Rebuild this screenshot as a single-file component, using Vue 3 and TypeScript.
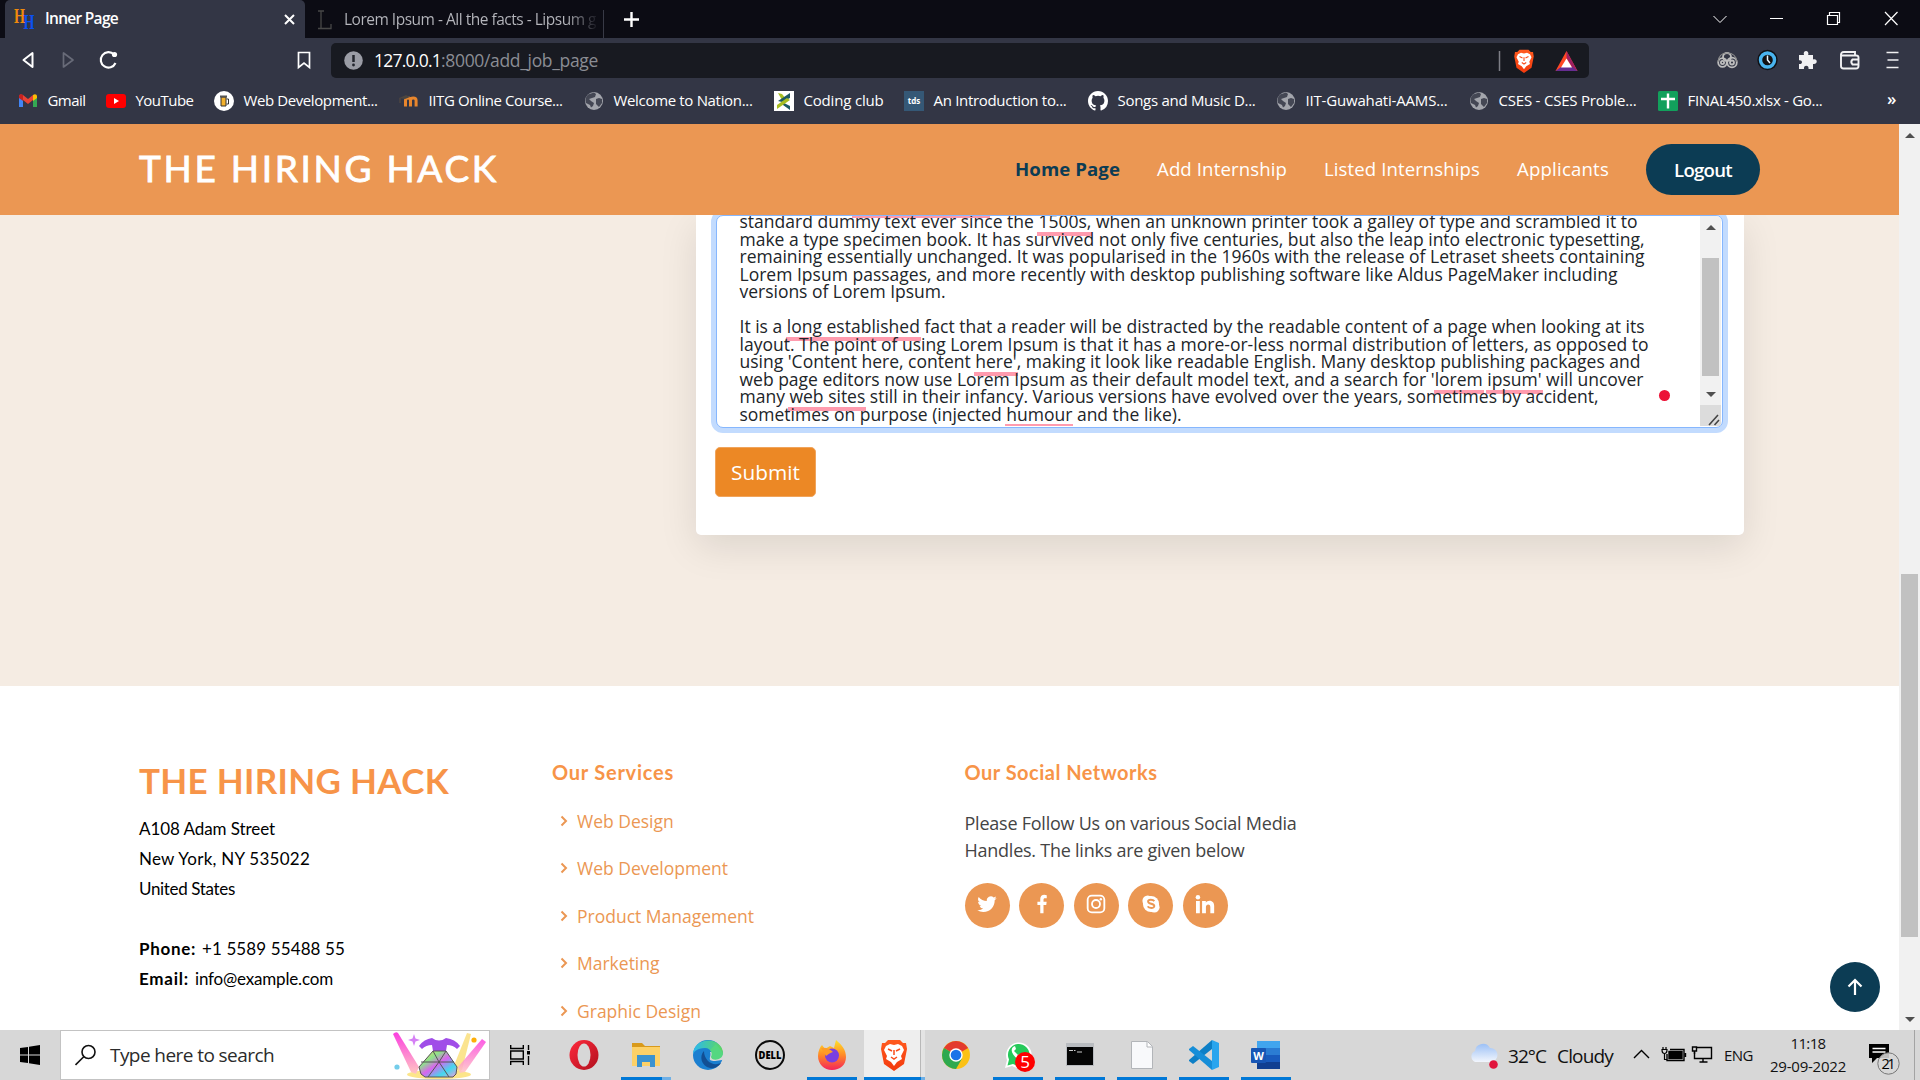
<script setup lang="ts">
import type { Directive } from 'vue'

interface Bookmark { label: string; icon: string; cell: number; text: number }

// Spreads the letters of a label so that it takes the given width in pixels.
const vFit: Directive<HTMLElement, number> = {
  mounted(el, binding) {
    const count = (el.textContent ?? '').length
    const natural = el.getBoundingClientRect().width
    if (count > 1) el.style.letterSpacing = `${(binding.value - natural) / count}px`
  },
}

const bookmarks: Bookmark[] = [
  { label: 'Gmail', icon: 'gmail', cell: 88, text: 38 },
  { label: 'YouTube', icon: 'youtube', cell: 108, text: 58 },
  { label: 'Web Development...', icon: 'beer', cell: 185, text: 134 },
  { label: 'IITG Online Course...', icon: 'moodle', cell: 185, text: 134 },
  { label: 'Welcome to Nation...', icon: 'globe', cell: 190, text: 139 },
  { label: 'Coding club', icon: 'coding', cell: 130, text: 80 },
  { label: 'An Introduction to...', icon: 'tds', cell: 184, text: 133 },
  { label: 'Songs and Music D...', icon: 'github', cell: 188, text: 138 },
  { label: 'IIT-Guwahati-AAMS...', icon: 'globe', cell: 193, text: 142 },
  { label: 'CSES - CSES Proble...', icon: 'globe', cell: 189, text: 138 },
  { label: 'FINAL450.xlsx - Go...', icon: 'sheets', cell: 220, text: 135 },
]

const services: string[] = ['Web Design', 'Web Development', 'Product Management', 'Marketing', 'Graphic Design']
const socials: string[] = ['twitter', 'facebook', 'instagram', 'skype', 'linkedin']
const apps: { name: string; state: string }[] = [
  { name: 'opera', state: '' },
  { name: 'explorer', state: 'open stacked' },
  { name: 'edge', state: '' },
  { name: 'dell', state: '' },
  { name: 'firefox', state: 'open' },
  { name: 'brave', state: 'open current' },
  { name: 'chrome', state: '' },
  { name: 'whatsapp', state: 'open' },
  { name: 'terminal', state: 'open' },
  { name: 'file', state: 'open' },
  { name: 'vscode', state: 'open' },
  { name: 'word', state: 'open' },
]
</script>

<template>
  <div class="screen">
    <svg class="defs" width="0" height="0">
      <defs>
        <symbol id="i-gmail" viewBox="0 0 20 20">
          <path d="M1 5v11h4V9z" fill="#4285f4" /><path d="M15 9v7h4V5z" fill="#34a853" />
          <path d="M1 5.5C1 3 3.500 3 5 4l5 4 5-4v5l-5 4-5-4-4-3z" fill="#ea4335" />
          <path d="M15 4c2-1.500 4-.5 4 1.500V7l-4 3z" fill="#fbbc04" /><path d="M1 5.500V7l4 3V4C3 2.500 1 3.500 1 5.500z" fill="#c5221f" />
        </symbol>
        <symbol id="i-youtube" viewBox="0 0 20 20"><rect y="3" width="20" height="14" rx="3" fill="#f00" /><path d="M8 7l5 3-5 3z" fill="#fff" /></symbol>
        <symbol id="i-beer" viewBox="0 0 20 20"><circle cx="10" cy="10" r="10" fill="#fff" /><path d="M7 6h5v9H7z" fill="#f4b22c" stroke="#333" /><path d="M12.500 8h2v5h-2" fill="none" stroke="#333" /><path d="M6 5.500h7" stroke="#555" stroke-width="2" /></symbol>
        <symbol id="i-moodle" viewBox="0 0 20 20"><path d="M6.500 15.500V9.500q0-2.500 2.500-2.500t2.500 2.500v6M11.500 9.500q0-2.500 2.800-2.500t2.800 2.500v6" fill="none" stroke="#e8862d" stroke-width="3" /><path d="M0 7l7-3 4 2-5 2z" fill="#4b4540" /><path d="M1 7v5" stroke="#5a4c40" /></symbol>
        <symbol id="i-globe" viewBox="0 0 20 20"><circle cx="10" cy="10" r="9" fill="#a3a5ac" /><path d="M4 3.500C1.500 6 1 9 2 12l4 2 1 2.500 2-1.500 1-3-3-2-2-2 3-1 3-1 1-3-2-1.500zM12 8l3-1 3 1v4l-3 4-3-3z" fill="#444754" /></symbol>
        <symbol id="i-coding" viewBox="0 0 20 20"><rect width="20" height="20" fill="#fff" /><path d="M4 2l4 1 4 5-3 3z" fill="#a8bd21" /><path d="M16 2v5l-8 4-4-1zM8 11l8 4v4l-7-5z" fill="#1d5963" /><path d="M3 18v-4l10-7 3 2z" fill="#a8bd21" /></symbol>
        <symbol id="i-tds" viewBox="0 0 20 20"><rect width="20" height="20" fill="#355876" /><text x="10" y="12.800" font-family="Open Sans" font-size="8" font-weight="700" text-anchor="middle" fill="#fff">tds</text></symbol>
        <symbol id="i-github" viewBox="0 0 16 16"><path fill="#fff" d="M8 0C3.580 0 0 3.580 0 8c0 3.540 2.290 6.530 5.470 7.590.4.070.55-.17.55-.38 0-.19-.01-.82-.01-1.490-2.010.37-2.530-.49-2.690-.94-.09-.23-.48-.94-.82-1.130-.28-.15-.68-.52-.01-.53.63-.01 1.080.58 1.230.82.72 1.210 1.870.87 2.330.66.07-.52.28-.87.51-1.070-1.780-.2-3.640-.89-3.640-3.950 0-.87.31-1.590.82-2.150-.08-.2-.36-1.020.08-2.120 0 0 .67-.21 2.200.82a7.600 7.600 0 0 1 4 0c1.530-1.040 2.200-.82 2.200-.82.44 1.100.16 1.920.08 2.120.51.56.82 1.270.82 2.150 0 3.070-1.870 3.750-3.650 3.950.29.25.54.73.54 1.480 0 1.070-.01 1.930-.01 2.200 0 .21.15.46.55.38A8 8 0 0 0 16 8c0-4.420-3.580-8-8-8z" /></symbol>
        <symbol id="i-sheets" viewBox="0 0 20 20"><rect width="20" height="20" rx="1.500" fill="#12a05c" /><path d="M10 2.500v15M3 8h14" stroke="#fff" stroke-width="2.400" /></symbol>

        <symbol id="s-twitter" viewBox="0 0 24 24"><path d="M23.600 4.900a9.500 9.500 0 0 1-2.700.8 4.700 4.700 0 0 0 2.100-2.600 9.600 9.600 0 0 1-3 1.100 4.800 4.800 0 0 0-8.200 4.300A13.500 13.500 0 0 1 2 3.600a4.800 4.800 0 0 0 1.500 6.300 4.700 4.700 0 0 1-2.200-.6c0 2.300 1.600 4.300 3.800 4.800a4.700 4.700 0 0 1-2.100.1 4.800 4.800 0 0 0 4.400 3.300A9.600 9.600 0 0 1 .3 19.500a13.500 13.500 0 0 0 7.300 2.100c8.800 0 13.900-7.400 13.600-14.200a9.700 9.700 0 0 0 2.400-2.500z" /></symbol>
        <symbol id="s-facebook" viewBox="0 0 24 24"><path d="M13.800 23V13.200h3.300l.5-3.900h-3.800V6.900c0-1.100.3-1.900 1.900-1.900h2V1.500A27 27 0 0 0 14.800 1c-2.900 0-4.900 1.800-4.900 5v3.300H6.500v3.900h3.400V23z" /></symbol>
        <symbol id="s-instagram" viewBox="0 0 24 24"><g fill="none" stroke="#fff" stroke-width="2.200"><rect x="2" y="2" width="20" height="20" rx="5" /><circle cx="12" cy="12" r="4.800" /></g><circle cx="17.800" cy="6.200" r="1.500" /></symbol>
        <symbol id="s-skype" viewBox="0 0 24 24"><circle cx="8" cy="8" r="6.300" /><circle cx="16" cy="16" r="6.300" /><circle cx="12" cy="12" r="9.700" /><path d="M16 8.500C14.500 6.500 8.500 6.200 8.500 9c0 3.500 7.500 2 7.500 5.500 0 3.200-6.700 2.800-8 .3" fill="none" stroke="#eb9753" stroke-width="2.300" /></symbol>
        <symbol id="s-linkedin" viewBox="0 0 24 24"><circle cx="3.500" cy="3.800" r="2.700" /><path d="M1.200 8.500h4.600V23H1.200zM8.500 8.500H13v2c2-3.600 10-3.400 10 3.700V23h-4.600v-7.500c0-4.200-5.300-3.900-5.300 0V23H8.500z" /></symbol>

        <linearGradient id="g-op" x1="0" x2="1" y2="1"><stop stop-color="#ff2a3c" /><stop offset="1" stop-color="#b0101e" /></linearGradient>
        <linearGradient id="g-br" y2="1" x2="0"><stop stop-color="#ff5a1f" /><stop offset="1" stop-color="#f33a0d" /></linearGradient>
        <linearGradient id="g-ed" x2="1"><stop stop-color="#2bb8f0" /><stop offset="1" stop-color="#5fd85c" /></linearGradient>
        <linearGradient id="g-ff" y2="1" x2="0"><stop stop-color="#ffe22b" /><stop offset=".5" stop-color="#ff8a26" /><stop offset="1" stop-color="#f5245b" /></linearGradient>
        <linearGradient id="g-cl" y2="1" x2="0"><stop stop-color="#9cc0f5" /><stop offset="1" stop-color="#f2f6fd" /></linearGradient>
        <linearGradient id="g-dr" x2="1" y2="1"><stop stop-color="#ffd75e" /><stop offset=".3" stop-color="#8ee28b" /><stop offset=".5" stop-color="#d964ef" /><stop offset=".75" stop-color="#42d9ee" /><stop offset="1" stop-color="#f59ad6" /></linearGradient>
        <linearGradient id="g-pk" y2="1" x2="0"><stop stop-color="#fb3fe0" /><stop offset="1" stop-color="#ffc6c2" /></linearGradient>

        <symbol id="a-opera" viewBox="0 0 40 40"><ellipse cx="20" cy="20" rx="14.500" ry="15" fill="url(#g-op)" /><ellipse cx="20" cy="20" rx="6.500" ry="11.500" fill="#d7d7d7" /></symbol>
        <symbol id="a-explorer" viewBox="0 0 40 40"><path d="M6 8h10l3 3h15v5H6z" fill="#d99a1b" /><path d="M6 12h28v19H6z" fill="#fdd167" /><path d="M11 20h18v12h-5v-5h-8v5h-5z" fill="#3c93cf" /></symbol>
        <symbol id="a-edge" viewBox="0 0 40 40"><circle cx="20" cy="20" r="15" fill="#1b7fd0" /><path d="M5 20C5 1 34 1 35 18c0 8-12 8-12 4 1-2 1-9-6-9-8 0-12 4-12 7z" fill="url(#g-ed)" /><path d="M16 16c-5 5-3 15 6 17 5 1 9-2 11-5-9 4-17-3-17-12z" fill="#124f94" /><path d="M22 17c2 5-4 9 5 9l7-1 3-1-1-4-8-3z" fill="#d7d7d7" /><path d="M35 18c0 8-12 8-12 4 1-2 1-5-1-7l6-6z" fill="#55d780" /></symbol>
        <symbol id="a-dell" viewBox="0 0 40 40"><circle cx="20" cy="20" r="14" fill="none" stroke="#0a0a0a" stroke-width="2" /><text x="20" y="24" font-family="Open Sans" font-size="10.500" font-weight="800" text-anchor="middle" textLength="23" lengthAdjust="spacingAndGlyphs">DELL</text></symbol>
        <symbol id="a-firefox" viewBox="0 0 40 40"><path d="M24 5c6 5 10 10 10 17 0 8-6 13-14 13S6 29 6 21c0-5 2-9 4-11l3 4 5-3 4 2z" fill="url(#g-ff)" /><circle cx="20" cy="20.500" r="7" fill="#7a3fe0" /><path d="M9 13c5-1 9 1 12 4-4 1-5 3-7 4z" fill="#ff9c27" /></symbol>
        <symbol id="a-brave" viewBox="0 0 40 40"><path d="M14 5h12l3 3 3 0 1 6-3 15-10 7-10-7L7 14l1-6 3 0z" fill="url(#g-br)" /><path d="M12 11l4-2 4 1 4-1 4 2 2 4-3 6 1 3-5 3-3 4-3-4-5-3 1-3-3-6z" fill="#fff" /><path d="M14 14l4 2M26 14l-4 2M20 15v5M17 22l3 2 3-2" fill="none" stroke="#fa4d1b" stroke-width="1.500" /></symbol>
        <symbol id="a-chrome" viewBox="0 0 40 40"><circle cx="20" cy="20" r="14" fill="#fbc116" /><path d="M20 20L7.900 13A14 14 0 0 1 32.100 13z" fill="#e33b2e" /><path d="M7.900 13A14 14 0 0 0 20 34l6-10.500-6-3.500z" fill="#2da94f" /><circle cx="20" cy="20" r="6.700" fill="#fff" /><circle cx="20" cy="20" r="5.300" fill="#1a73e8" /></symbol>
        <symbol id="a-whatsapp" viewBox="0 0 40 40"><path d="M7 33l2-8A12.800 12.800 0 1 1 14 31z" fill="#fff" /><path d="M9.500 30.500l1.500-6A10.800 10.800 0 1 1 15 29z" fill="#26c95a" /><path d="M15 12c-3 3-1 8 6 13l4-2-3-4-2 1-4-4 2-2-1-3z" fill="#fff" /><circle cx="27" cy="27" r="10" fill="#f00" /><text x="27" y="33" font-family="Open Sans" font-size="17" text-anchor="middle" fill="#fff">5</text></symbol>
        <symbol id="a-terminal" viewBox="0 0 40 40"><rect x="6" y="8" width="28" height="23" fill="#b9bcc0" /><rect x="7" y="12" width="26" height="18" fill="#050505" /><path d="M9 15.500h4M14 15.500h1.500M17 17h5" stroke="#ccc" /></symbol>
        <symbol id="a-file" viewBox="0 0 40 40"><path d="M9.500 6.500h16l5 5v22h-21z" fill="#f8f9fb" stroke="#b2b5b9" /><path d="M25 7v5h5" fill="#fff" stroke="#b2b5b9" /></symbol>
        <symbol id="a-vscode" viewBox="0 0 40 40"><path d="M28 5l7 3v24l-7 3z" fill="#2aa5ee" /><path d="M28 5v9L9 29l-4-3v-1z" fill="#0d7fc6" /><path d="M28 35v-9L9 11l-4 3v1z" fill="#168ed8" /></symbol>
        <symbol id="a-word" viewBox="0 0 40 40"><path d="M11 6h23v8H11z" fill="#41a5ee" /><path d="M11 13h23v7H11z" fill="#2b7cd3" /><path d="M11 20h23v7H11z" fill="#185abd" /><path d="M11 27h23v7H11z" fill="#103f91" /><rect x="5" y="13" width="15" height="15" rx="1" fill="#1756b5" /><text x="12.500" y="24.500" font-family="Open Sans" font-size="11" font-weight="700" text-anchor="middle" fill="#fff">W</text></symbol>
      </defs>
    </svg>

    <!-- Tab strip -->
    <div class="tabs">
      <div class="tab active">
        <svg class="fav" width="21" height="22" viewBox="0 0 21 22" font-family="Liberation Serif" font-size="21" font-weight="700"><text x="0" y="15" fill="#f08a0c" textLength="11" lengthAdjust="spacingAndGlyphs">H</text><text x="9.500" y="20.500" fill="#0b50f0" textLength="11" lengthAdjust="spacingAndGlyphs">H</text></svg>
        <span class="title" v-fit="73">Inner Page</span>
        <svg class="x" width="11" height="11" viewBox="0 0 11 11"><path d="M1 1l9 9M10 1l-9 9" stroke="#fff" stroke-width="2" /></svg>
      </div>
      <div class="tab">
        <svg class="fav2" width="16" height="20" viewBox="0 0 16 20"><path d="M1 1h6M4 1v17M1 18.500h13V14" fill="none" stroke="#474747" stroke-width="1.300" /></svg>
        <span class="title dim" v-fit="252">Lorem Ipsum - All the facts - Lipsum g</span>
      </div>
      <svg class="plus" width="15" height="15" viewBox="0 0 15 15"><path d="M7.500 0v15M0 7.500h15" stroke="#fff" stroke-width="2.400" /></svg>
      <svg class="winctl" width="190" height="20" viewBox="0 0 190 20" fill="none" stroke="#fff"><path d="M3.500 7l6.500 6.500L16.500 7" /><path d="M60 9.500h13" /><path d="M117.500 6.500h10v9h-10zM119.500 6V3.500h10v10h-2" stroke-width="1.200" /><path d="M175 3l12.500 13M187.500 3L175 16" stroke-width="1.200" /></svg>
    </div>

    <!-- Toolbar -->
    <div class="toolbar">
      <svg class="navs" width="300" height="30" viewBox="0 0 300 30" fill="none" stroke="#fff" stroke-width="2">
        <path d="M12.500 8v14L3.500 15z" stroke-linejoin="round" /><path d="M43.500 8v14l9.500-7z" stroke="#686b78" stroke-width="1.700" stroke-linejoin="round" />
        <path d="M94 9.500A7.700 7.700 0 1 0 95.500 18" stroke-width="2.100" /><circle cx="94.500" cy="9.500" r="2.600" fill="#fff" stroke="none" />
        <path d="M278.500 7.500h11v15l-5.500-4.500-5.500 4.500z" stroke-width="1.700" />
      </svg>
      <div class="url">
        <svg width="19" height="19" viewBox="0 0 19 19"><circle cx="9.500" cy="9.500" r="9.300" fill="#9a9ca5" /><path d="M9.500 4v7" stroke="#22252d" stroke-width="2.500" /><circle cx="9.500" cy="14" r="1.400" fill="#22252d" /></svg>
        <span class="host" v-fit="67">127.0.0.1</span><span class="path" v-fit="157">:8000/add_job_page</span>
        <svg class="shields" width="90" height="28" viewBox="0 0 90 28">
          <path d="M2.500 4v20" stroke="#7c7e86" stroke-width="1.500" />
          <use href="#a-brave" x="12" y="-1" width="30" height="30" />
          <path d="M69.500 4L58.500 24h22z" fill="#ff4724" /><path d="M69.500 4l11 20-5-3-6-10z" fill="#9e1f63" /><path d="M58.500 24h22l-5-4H64z" fill="#662d91" /><path d="M69.500 11.500l5.500 9H64z" fill="#fff" />
        </svg>
      </div>
      <svg class="exts" width="190" height="30" viewBox="0 0 190 30">
        <g fill="none" stroke="#bdbdbd" stroke-width="1.800"><circle cx="12" cy="12" r="4" /><circle cx="7.500" cy="17.500" r="4.300" /><circle cx="17" cy="17.500" r="4.800" /><path d="M3 17q1-9 9-9 9 0 10 9" stroke="#8d8d8d" stroke-width="1.200" /><circle cx="17" cy="17.500" r="2" /><circle cx="7.500" cy="17.500" r="1.600" /></g>
        <circle cx="52.500" cy="15" r="10.200" fill="#101216" /><circle cx="52.500" cy="15" r="7" fill="#111" stroke="#49b4ee" stroke-width="3.400" /><path d="M52.500 10.500V15l2.500 3" fill="none" stroke="#e8f6ff" stroke-width="1.500" />
        <path d="M84 10h5c-1.800-5.500 5.800-5.500 4.200 0H98v4.500c5-1.500 5 5.500 0 4.500V24h-4.500c1-4.500-5.500-4.500-4.500 0H84v-5c4 .8 4-4.500 0-3.800z" fill="#f1f1f3" />
        <g fill="none" stroke="#f1f1f3" stroke-width="1.900"><path d="M126 10.500V21q0 2.500 2.500 2.500H141q2.500 0 2.500-2.500v-8.500q0-2-2.500-2zm0 .5q-.5-4 3-4h11v3.500" /><path d="M143 14.500h-5.500q-2.500 2.500 0 5h5.500" /></g>
        <path d="M171.500 7.500h12M172.500 15h11M171.500 22.500h12" stroke="#f1f1f3" stroke-width="1.700" />
      </svg>
    </div>

    <!-- Bookmarks -->
    <div class="bookmarks">
      <div v-for="b in bookmarks" :key="b.label" class="bm" :style="{ width: b.cell + 'px' }">
        <svg width="20" height="20"><use :href="'#i-' + b.icon" width="20" height="20" /></svg>
        <span v-fit="b.text">{{ b.label }}</span>
      </div>
      <span class="more">»</span>
    </div>

    <!-- Web page -->
    <div class="viewport">
      <div class="page">
        <header class="site">
          <h1 v-fit="360">THE HIRING HACK</h1>
          <nav>
            <a class="on" v-fit="105">Home Page</a><a v-fit="130">Add Internship</a><a v-fit="156">Listed Internships</a><a v-fit="92">Applicants</a>
            <a class="logout"><span v-fit="58">Logout</span></a>
          </nav>
        </header>
        <section class="hero">
          <div class="card">
            <div class="area">
              <div class="lines">
                <u class="first"></u>
                <p><span v-fit="898">standard dummy text ever since the <u>1500s,</u> when an unknown printer took a galley of type and scrambled it to</span></p>
                <p><span v-fit="905">make a type specimen book. It has survived not only five centuries, but also the leap into electronic typesetting,</span></p>
                <p><span v-fit="905">remaining essentially unchanged. It was popularised in the 1960s with the release of Letraset sheets containing</span></p>
                <p><span v-fit="878">Lorem Ipsum passages, and more recently with desktop publishing software like Aldus PageMaker including</span></p>
                <p><span v-fit="206">versions of Lorem Ipsum.</span></p>
                <p></p>
                <p><span v-fit="905">It is a <u>long established</u> fact that a reader will be distracted by the readable content of a page when looking at its</span></p>
                <p><span v-fit="909">layout. The point of using Lorem Ipsum is that it has a more-or-less normal distribution of letters, as opposed to</span></p>
                <p><span v-fit="901">using 'Content here, content <u>here'</u>, making it look like readable English. Many desktop publishing packages and</span></p>
                <p><span v-fit="904">web page editors now use Lorem Ipsum as their default model text, and a search for '<u>lorem</u> <u>ipsum'</u> will uncover</span></p>
                <p><span v-fit="859">many <u>web sites</u> still in their infancy. Various versions have evolved over the years, sometimes by accident,</span></p>
                <p><span v-fit="442">sometimes on purpose (injected <u class="thin">humour</u> and the like).</span></p>
              </div>
              <i class="dot"></i>
              <div class="bar">
                <b class="up"></b><div class="thumb"></div><b class="down"></b>
                <svg class="grip" width="21" height="21" viewBox="0 0 21 21"><path d="M9 20l9-10M14.500 20l4.500-5M9 20l2-2" stroke="#444" stroke-width="1.600" /></svg>
              </div>
            </div>
            <button class="submit"><span v-fit="69">Submit</span></button>
          </div>
        </section>
        <footer>
          <div class="col c1">
            <h2><span v-fit="310">THE HIRING HACK</span></h2>
            <p><span v-fit="136">A108 Adam Street</span></p>
            <p><span v-fit="171">New York, NY 535022</span></p>
            <p><span v-fit="96">United States</span></p>
            <p></p>
            <p><strong v-fit="57">Phone:</strong><span class="val" v-fit="143">+1 5589 55488 55</span></p>
            <p><strong v-fit="50">Email:</strong><span class="val" v-fit="138">info@example.com</span></p>
          </div>
          <div class="col c2">
            <h4><span v-fit="122">Our Services</span></h4>
            <div v-for="s in services" :key="s" class="svc">
              <svg width="8" height="12" viewBox="0 0 8 12"><path d="M1.500 1.500L6 6l-4.500 4.500" fill="none" stroke="#eb9753" stroke-width="2" /></svg><span>{{ s }}</span>
            </div>
          </div>
          <div class="col c3">
            <h4><span v-fit="193">Our Social Networks</span></h4>
            <div class="follow"><span v-fit="332">Please Follow Us on various Social Media</span><br /><span v-fit="280">Handles. The links are given below</span></div>
            <div class="socials">
              <a v-for="s in socials" :key="s"><svg width="20" height="20" fill="#fff"><use :href="'#s-' + s" width="20" height="20" /></svg></a>
            </div>
          </div>
        </footer>
        <div class="top"><svg width="16" height="18" viewBox="0 0 16 18"><path d="M8 17V2M1.500 8.500L8 2l6.500 6.500" fill="none" stroke="#fff" stroke-width="2.200" /></svg></div>
      </div>
      <div class="scroll"><b class="up"></b><div class="thumb"></div><b class="down"></b></div>
    </div>

    <!-- Taskbar -->
    <div class="taskbar">
      <div class="start"><svg width="20" height="20" viewBox="0 0 20 20"><path d="M0 3l8-1v7.500H0zM9 1.800L20 0v9.500H9zM0 10.500h8V18l-8-1zM9 10.500h11V20L9 18.200z" /></svg></div>
      <div class="search">
        <svg width="22" height="22" viewBox="0 0 22 22" fill="none" stroke="#111" stroke-width="1.600"><circle cx="13.500" cy="8" r="6.500" /><path d="M9 12.500L.5 21" /></svg>
        <span v-fit="164">Type here to search</span>
        <svg class="art" width="96" height="48" viewBox="0 0 96 48">
          <ellipse cx="47" cy="43.500" rx="32" ry="4.500" fill="#fce58a" />
          <path d="M1 3q3-3 5-1l21 34-3 7-5-2z" fill="url(#g-pk)" /><path d="M79 3l-4-1-12 30 3 10 4-3z" fill="#fbe183" opacity=".9" /><path d="M94 11l-4-3-24 28 2 6 5-1z" fill="url(#g-pk)" opacity=".85" />
          <path d="M22 3l1.500 4.500L28 9l-4.500 1.500L22 15l-1.500-4.500L16 9l4.500-1.500z" fill="#d580f5" /><circle cx="82" cy="9" r="2.600" fill="#fdae08" /><circle cx="5" cy="36" r="2.600" fill="#74cdea" />
          <path d="M40 7q7 5 14 0 9 1 14 8l-3 3q-4-4-10-4l-1 6H41l-1-6q-6 0-10 4l-3-3q5-7 13-8z" fill="#a04de8" />
          <path d="M41 20h13l11 16-1 7-3 3H33l-4-3-2-7z" fill="url(#g-dr)" stroke="#555" /><path d="M41 20l6 11 7-11M29 31h33M47 31L36 46M47 31l10 15" fill="none" stroke="#555" />
        </svg>
      </div>
      <div class="view"><svg width="20" height="20" viewBox="0 0 20 20" fill="none" stroke="#000" stroke-width="1.400"><path d="M.7 0v3.500h12.600V0M.7 20v-3.500h12.600V20M.7 6h12.600v8H.7zM18.500 0v5M18.500 11v9" /><path d="M18.500 6v3.500" stroke-width="3" /></svg></div>
      <div v-for="a in apps" :key="a.name" class="app" :class="a.state"><svg width="40" height="40"><use :href="'#a-' + a.name" width="40" height="40" /></svg></div>
      <div class="tray">
        <svg class="cloud" width="32" height="28" viewBox="0 0 32 28"><path d="M7 20a6 6 0 0 1 0-11 8 8 0 0 1 15-3 7 7 0 0 1 1 14z" fill="url(#g-cl)" /><circle cx="25.500" cy="22.500" r="4.300" fill="#e1143c" /></svg>
        <span class="temp" v-fit="38">32°C</span><span class="cond" v-fit="56">Cloudy</span>
        <svg class="icons" width="82" height="20" viewBox="0 0 82 20" fill="none" stroke="#000" stroke-width="1.400"><path d="M3 14l7.500-7.500L18 14" /><rect x="38" y="7.500" width="13" height="7" fill="#000" /><path d="M36 10v6.500h17V5.500H39M54.500 9v4" /><path d="M32 3v2M35 3v2M31 5.500h5q0 4-2.500 4T31 5.500zM33.500 9v6.500H36" stroke-width="1.200" /><path d="M66 3.500h14.500v11H63.500V8M72 14v4M68.500 18h8" /><path d="M61.500 3h4v4h-4zM63.500 7v3" /></svg>
        <span class="eng" v-fit="29">ENG</span>
        <div class="clock"><span v-fit="35">11:18</span><span v-fit="76">29-09-2022</span></div>
        <svg class="note" width="34" height="36" viewBox="0 0 34 36"><path d="M2 3h20v14H10l-5 5v-5H2z" /><path d="M5.500 7.500h13M5.500 11h13" stroke="#fff" stroke-width="1.400" /><circle cx="21.500" cy="22.500" r="10.700" fill="#d7d7d7" fill-opacity=".88" stroke="#777" /><text x="21.500" y="28" font-family="Open Sans" font-size="14.500" font-weight="500" text-anchor="middle" textLength="14">21</text></svg>
        <i class="edge"></i>
      </div>
    </div>
  </div>
</template>

<style>
body { margin: 0; overflow: hidden; }
</style>

<style scoped>
* { box-sizing: border-box; }
.screen { width: 1920px; height: 1080px; overflow: hidden; font-family: "Open Sans", sans-serif; display: flex; flex-direction: column; background: #fff; }
.defs { position: absolute; }
span, strong, a, h1 { white-space: nowrap; }
svg { flex: none; display: block; }

.tabs { height: 38px; flex: none; background: #0c0c14; display: flex; align-items: center; }
.tab { height: 38px; display: flex; align-items: center; }
.tab.active { margin-left: 5px; width: 300px; background: #333645; border-radius: 5px 5px 0 0; }
.fav { margin-left: 9px; overflow: visible; }
.title { margin: 0 0 2px 10px; color: #fff; font-size: 15.500px; font-weight: 600; display: inline-block; line-height: 34px; }
.x { margin-left: auto; margin-right: 10px; }
.tab:not(.active) { width: 299px; border-right: 1px solid #383a46; height: 28px; margin-top: 10px; }
.fav2 { margin: -8px 0 0 12px; }
.title.dim { font-weight: 400; margin: -11px 0 0 11px; background: linear-gradient(90deg, #b6b7bd 88%, #1c1c25); -webkit-background-clip: text; background-clip: text; color: transparent; }
.plus { margin-left: 20px; }
.winctl { margin-left: auto; margin-right: 20px; }

.toolbar { height: 45px; flex: none; background: #333645; display: flex; align-items: center; }
.navs { margin-left: 19.500px; margin-top: -1px; }
.url { margin-left: 11.500px; width: 1258px; height: 35px; border-radius: 5px; background: #181a21; display: flex; align-items: center; font-size: 17.500px; padding-left: 13px; }
.host, .path { margin-top: -1px; }
.host { color: #fff; margin-left: 11px; }
.path { color: #8b8d94; }
.shields { margin-left: auto; margin-right: 2px; }
.exts { margin-left: 126px; margin-top: -1px; }

.bookmarks { height: 41px; flex: none; background: #333645; display: flex; align-items: center; padding: 0 0 5px 18px; color: #fff; font-size: 15px; }
.bm { display: flex; align-items: center; flex: none; }
.bm span { margin: -3px 0 0 9.500px; }
.more { margin-left: 9px; margin-top: -4px; line-height: 18px; font-size: 17px; font-weight: 600; }

.viewport { height: 906px; flex: none; display: flex; }
.page { width: 1899px; height: 906px; position: relative; overflow: hidden; }
.site { height: 91px; background: #eb9753; display: flex; align-items: center; position: relative; z-index: 3; padding: 0 139px; }
h1 { margin: -3px 0 0; font-family: Lato, sans-serif; font-weight: 400; font-size: 37px; color: #fff; line-height: 50px; -webkit-text-stroke: .8px #fff; }
nav { margin-left: auto; display: flex; align-items: center; gap: 37px; font-size: 18.600px; color: #fff; line-height: 27px; }
nav a { margin-top: -2px; }
nav .on { color: #0c3c54; font-weight: 700; }
nav .logout { width: 114px; height: 51px; margin-top: 0; border-radius: 26px; background: #0c3c54; display: flex; align-items: center; justify-content: center; font-weight: 600; padding-bottom: 1px; }

.hero { height: 471px; background: #f5ece3; display: flex; padding-left: 696px; position: relative; }
.card { width: 1048px; height: 320px; background: #fff; border-radius: 0 0 5px 5px; box-shadow: 0 12px 38px rgba(0, 0, 0, .1); padding-left: 20px; }
.area { position: relative; z-index: 0; width: 1006.500px; height: 213px; border: 1px solid #86b7fe; border-radius: 7px; box-shadow: 0 0 0 5px #c2dbfe; background: #fff; display: flex; overflow: hidden; overflow: clip; }
.lines { font-size: 17.500px; line-height: 17.500px; color: #212529; padding-left: 22.500px; margin-top: -3px; flex: 1; position: relative; }
.lines p { margin: 0; height: 17.500px; white-space: nowrap; }
.lines u { text-decoration: none; position: relative; }
.lines u::after { content: ""; position: absolute; left: -1px; right: -1px; top: 23px; height: 4px; background: #ff9bae; z-index: -1; }
.lines u.thin::after { top: 22px; height: 2px; }
.lines u.first { position: absolute; left: 136px; top: 3px; width: 136px; height: 2px; }
.lines u.first::after { top: 0; height: 2px; }
.dot { position: absolute; left: 942px; bottom: 26.500px; width: 11px; height: 11px; border-radius: 50%; background: #ec1337; }
.bar { width: 21px; background: #f1f1f1; display: flex; flex-direction: column; align-items: center; margin-right: .5px; height: 210px; }
b { border: 5px solid transparent; width: 0; height: 0; }
b.up { border-bottom-color: #505050; border-top: 0; }
b.down { border-top-color: #505050; border-bottom: 0; }
.bar .up { margin-top: 9px; }
.bar .thumb { width: 17px; height: 118px; background: #c1c1c1; margin-top: 28px; }
.bar .down { margin-top: 16px; }
.grip { margin-top: auto; background: #dcdcdc; }
.submit { display: flex; align-items: center; justify-content: center; margin: 19px 0 0 -1px; width: 101px; height: 50px; border: 1px solid #f0a45c; border-radius: 5px; background: #ec8825; color: #fff; font: 20.800px "Open Sans", sans-serif; padding: 0 0 1px; }

footer { display: flex; padding-left: 139px; height: 344px; }
.col { width: 413px; }
.c3 { margin-left: -.5px; }
h2 { font: 700 35px/44px Lato, sans-serif; color: #f79448; margin: 72px 0 12px; }
.c1 { color: #000; font: 17px/30px Lato, sans-serif; }
.c1 p { margin: 0; height: 30px; }
.val { margin-left: 6px; }
h4 { font: 700 20px/24px Lato, sans-serif; color: #f79448; margin: 74px 0 13px; }
.svc { display: flex; align-items: center; height: 47.500px; color: #eb9753; font-size: 17.500px; padding-left: 8px; }
.svc span { margin-left: 9px; }
.c3 h4 { margin-bottom: 26px; }
.follow { font-size: 18px; line-height: 27px; color: #444; }
.socials { display: flex; gap: 9.500px; margin-top: 19px; }
.socials a { width: 45px; height: 45px; border-radius: 50%; background: #eb9753; display: flex; align-items: center; justify-content: center; padding-bottom: 3px; }
.top { position: absolute; right: 19px; bottom: 18px; width: 50px; height: 50px; border-radius: 50%; background: #0c3c54; display: flex; align-items: center; justify-content: center; }
.scroll { width: 21px; background: #f1f1f1; display: flex; flex-direction: column; align-items: center; }
.scroll .up { margin-top: 9px; }
.scroll .thumb { width: 17px; height: 363px; background: #c1c1c1; margin-top: 436px; }
.scroll .down { margin-top: auto; margin-bottom: 8px; }

.taskbar { height: 50px; flex: none; background: #d7d7d7; display: flex; }
.start { width: 60px; padding: 15px 0 0 20px; }
.search { width: 430px; height: 50px; background: #fff; border: 1px solid #c3c3c3; display: flex; align-items: center; padding-left: 14px; font-size: 19px; color: #2b2b2b; }
.search span { margin-left: 13px; }
.art { margin: 0 1px 0 auto; }
.view { width: 63px; padding: 15px 0 0 20px; }
.app { width: 62px; display: flex; justify-content: center; padding-top: 5px; position: relative; }
.app.open::after { content: ""; position: absolute; left: 6px; width: 50px; bottom: 0; height: 3px; background: #0078d7; }
.app.stacked::after { background: linear-gradient(90deg, #0078d7 41px, #6fb0e6 41px); }
.app.current { background: linear-gradient(90deg, transparent 1px, #eee 1px, #eee 57px, #b8b8b8 57px, #b8b8b8 58px, #e4e4e4 58px); }
.app.current::after { left: 1px; width: 61px; background: linear-gradient(90deg, #0078d7 57px, #6fb0e6 57px); }
.tray { margin-left: auto; display: flex; align-items: center; padding-right: 5px; color: #111; font-size: 19px; }
.cloud { margin-top: 2px; }
.temp { margin-left: 8px; }
.cond { margin-left: 11px; }
.temp, .cond { margin-top: 2px; }
.icons { margin-left: 18px; margin-top: -2px; }
.eng { font-size: 15px; margin-left: 11px; }
.clock { width: 76px; margin-left: 17px; display: flex; flex-direction: column; align-items: center; font-size: 15px; line-height: 23px; }
.note { margin-left: 21px; margin-top: 8px; }
.edge { width: 1px; height: 50px; background: #a3a3a3; margin-left: 13px; }
</style>
